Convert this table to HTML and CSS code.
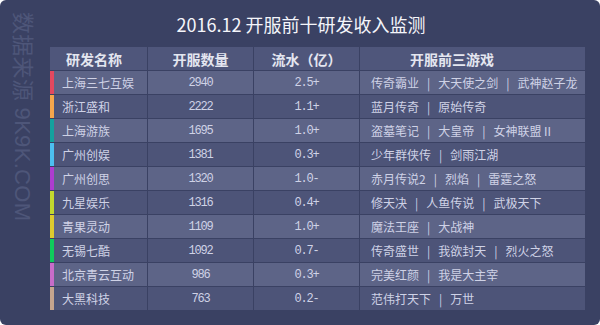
FILE: index.html
```html
<!DOCTYPE html>
<html lang="zh-CN">
<head>
<meta charset="utf-8">
<title>2016.12 开服前十研发收入监测</title>
<link rel="stylesheet" href="styles.css">
</head>
<body>
<div class="frame">
  <div class="watermark">数据来源 9K9K.COM</div>
  <h1 class="title">2016.12 开服前十研发收入监测</h1>
  <div class="table">
    <div class="row head">
      <div class="cell c1">研发名称</div>
      <div class="cell c2">开服数量</div>
      <div class="cell c3">流水（亿）</div>
      <div class="cell c4">开服前三游戏</div>
    </div>
    <div class="row odd">
      <div class="cell c1 red">上海三七互娱</div>
      <div class="cell c2 num">2940</div>
      <div class="cell c3 num">2.5+</div>
      <div class="cell c4">传奇霸业<span class="sep">|</span>大天使之剑<span class="sep">|</span>武神赵子龙</div>
    </div>
    <div class="row even">
      <div class="cell c1 orange">浙江盛和</div>
      <div class="cell c2 num">2222</div>
      <div class="cell c3 num">1.1+</div>
      <div class="cell c4">蓝月传奇<span class="sep">|</span>原始传奇</div>
    </div>
    <div class="row odd">
      <div class="cell c1 teal">上海游族</div>
      <div class="cell c2 num">1695</div>
      <div class="cell c3 num">1.0+</div>
      <div class="cell c4">盗墓笔记<span class="sep">|</span>大皇帝<span class="sep">|</span>女神联盟Ⅱ</div>
    </div>
    <div class="row even">
      <div class="cell c1 sky">广州创娱</div>
      <div class="cell c2 num">1381</div>
      <div class="cell c3 num">0.3+</div>
      <div class="cell c4">少年群侠传<span class="sep">|</span>剑雨江湖</div>
    </div>
    <div class="row odd">
      <div class="cell c1 purple">广州创思</div>
      <div class="cell c2 num">1320</div>
      <div class="cell c3 num">1.0-</div>
      <div class="cell c4">赤月传说2<span class="sep">|</span>烈焰<span class="sep">|</span>雷霆之怒</div>
    </div>
    <div class="row even">
      <div class="cell c1 lime">九星娱乐</div>
      <div class="cell c2 num">1316</div>
      <div class="cell c3 num">0.4+</div>
      <div class="cell c4">修天决<span class="sep">|</span>人鱼传说<span class="sep">|</span>武极天下</div>
    </div>
    <div class="row odd">
      <div class="cell c1 yellow">青果灵动</div>
      <div class="cell c2 num">1109</div>
      <div class="cell c3 num">1.0+</div>
      <div class="cell c4">魔法王座<span class="sep">|</span>大战神</div>
    </div>
    <div class="row even">
      <div class="cell c1 green">无锡七酷</div>
      <div class="cell c2 num">1092</div>
      <div class="cell c3 num">0.7-</div>
      <div class="cell c4">传奇盛世<span class="sep">|</span>我欲封天<span class="sep">|</span>烈火之怒</div>
    </div>
    <div class="row odd">
      <div class="cell c1 pink">北京青云互动</div>
      <div class="cell c2 num">986</div>
      <div class="cell c3 num">0.3+</div>
      <div class="cell c4">完美红颜<span class="sep">|</span>我是大主宰</div>
    </div>
    <div class="row even">
      <div class="cell c1 tan">大黑科技</div>
      <div class="cell c2 num">763</div>
      <div class="cell c3 num">0.2-</div>
      <div class="cell c4">范伟打天下<span class="sep">|</span>万世</div>
    </div>
  </div>
</div>
</body>
</html>
```
FILE: styles.css
```css
html, body {
  margin: 0;
  padding: 0;
  background: #ffffff;
}
body {
  width: 600px;
  height: 325px;
  overflow: hidden;
  font-family: "Noto Sans CJK SC", "Noto Sans", sans-serif;
}
.frame {
  position: relative;
  width: 600px;
  height: 325px;
  background: #3a4163;
  border-radius: 6px;
  box-sizing: border-box;
}
.watermark {
  position: absolute;
  left: 11px;
  top: 12px;
  writing-mode: vertical-rl;
  text-orientation: sideways;
  font-family: "Liberation Sans", "Noto Sans CJK SC", sans-serif;
  font-size: 22px;
  line-height: 22px;
  letter-spacing: 0.3px;
  color: #4e5679;
  white-space: nowrap;
}
.title {
  margin: 0;
  height: 47px;
  display: flex;
  align-items: center;
  justify-content: center;
  font-size: 18px;
  font-weight: normal;
  color: #f4f5fa;
  padding-left: 2px;
}
.table {
  margin-left: 50px;
  width: 535px;
  display: flex;
  flex-direction: column;
  gap: 1px;
}
.row {
  display: grid;
  grid-template-columns: 97px 105px 105px 225px;
  column-gap: 1px;
  height: 23px;
}
.cell {
  display: flex;
  align-items: center;
  font-size: 12px;
  color: #cfd2e6;
  white-space: nowrap;
  box-sizing: border-box;
}
.head .cell {
  background: #4f567b;
  font-size: 14px;
  font-weight: bold;
  color: #e4e6f0;
}
.odd .cell { background: #5d6487; }
.even .cell { background: #4d5478; }
.c1 { padding-left: 8px; border-left: 4px solid transparent; }
.head .c1 { padding-left: 16px; border-left: 0; }
.c2, .c3 { justify-content: center; }
.c4 { padding-left: 11px; }
.head .c4 { padding-left: 50px; }
.num {
  font-family: "Liberation Mono", "DejaVu Sans Mono", monospace;
  font-size: 12px;
  letter-spacing: -1.2px;
}
.sep { margin: 0 8px; }
.red { border-left-color: #e3485f; }
.orange { border-left-color: #f5a64c; }
.teal { border-left-color: #14a19e; }
.sky { border-left-color: #4cbff0; }
.purple { border-left-color: #ad3dcf; }
.lime { border-left-color: #c2d82e; }
.yellow { border-left-color: #ddcb2e; }
.green { border-left-color: #0fca5c; }
.pink { border-left-color: #c86cc9; }
.tan { border-left-color: #c6a58e; }
```
